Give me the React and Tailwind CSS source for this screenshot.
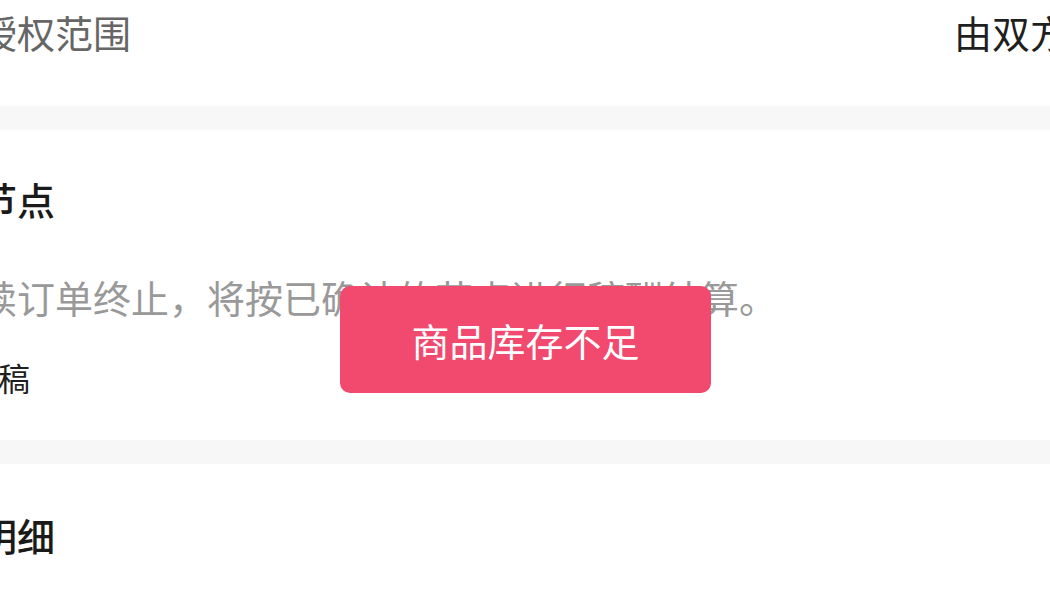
import React from 'react';

const font = { fontFamily: '"Noto Sans CJK SC", "Noto Sans", sans-serif' };

const Divider = () => <div className="h-[24px] bg-[#f7f7f7]" />;

export default function App() {
    return (
        <div className="relative w-[1050px] h-[591px] overflow-hidden bg-white" style={font}>
            <div className="-ml-[21px] w-[1165px]">
                {/* 授权范围 row */}
                <div className="flex h-[106px] pt-[13px]">
                    <span className="text-[38px] leading-[38px] text-[#666666]">授权范围</span>
                    <span className="ml-auto text-[38px] leading-[38px] text-[#1f1f1f]">由双方约定</span>
                </div>

                <Divider />

                {/* 节点 */}
                <div className="h-[310px] pt-[50px]">
                    <h2 className="text-[38px] leading-[38px] font-medium text-[#1a1a1a]">节点</h2>
                    <p className="mt-[60px] text-[38px] leading-[38px] text-[#999999] whitespace-nowrap">
                        续订单终止，将按已确认的节点进行稿酬结算。
                    </p>
                    <p className="mt-[45px] -ml-[13px] text-[32px] leading-[32px] text-[#1f1f1f]">初稿</p>
                </div>

                <Divider />

                {/* 明细 */}
                <div className="pt-[52px]">
                    <h2 className="text-[38px] leading-[38px] font-medium text-[#1a1a1a]">明细</h2>
                </div>
            </div>

            {/* toast */}
            <div className="absolute left-[340px] top-[286px] w-[371px] h-[107px] rounded-[10px] bg-[#f2496f] flex items-center justify-center">
                <span className="text-[38px] leading-[38px] text-white">商品库存不足</span>
            </div>
        </div>
    );
}
